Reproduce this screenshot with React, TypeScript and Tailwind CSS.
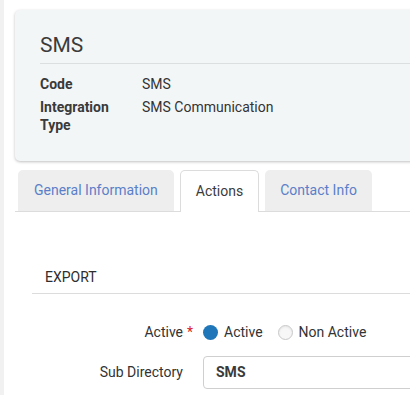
import React from "react";

const font = { fontFamily: "Roboto, 'Liberation Sans', sans-serif" };

function Radio({ checked }: { checked: boolean }) {
  if (checked) {
    return <span className="inline-block h-[15px] w-[15px] rounded-full bg-[#1f76b8]" />;
  }
  return (
    <span className="inline-block h-[15px] w-[15px] rounded-full border border-[#c8c8c8] bg-[#f7f7f7] shadow-[inset_0_1px_2px_rgba(0,0,0,0.08)]" />
  );
}

export default function App() {
  return (
    <div className="flex h-[395px] w-[410px] overflow-hidden bg-white text-[#333]" style={font}>
      <div className="w-[4px] shrink-0 bg-[#f1f1f1]" />
      <div className="flex flex-col pl-[11px] pt-[10px]">
        {/* header card */}
        <div className="w-[600px] rounded-[5px] bg-[#f3f6f7] pb-[27px] pl-[25px] pt-[23px] shadow-[0_1px_3px_rgba(0,0,0,0.25)]">
          <h1 className="h-[30px] text-[21px] leading-[24px] text-[#3b3b3b]">SMS</h1>
          <div className="border-t border-[#dcdfe0] pt-[11px] text-[14px] leading-[18px]">
            <div className="flex">
              <span className="w-[102px] font-bold text-[#3a3a3a]">Code</span>
              <span>SMS</span>
            </div>
            <div className="mt-[5px] flex">
              <span className="w-[102px] font-bold text-[#3a3a3a]">
                Integration
                <br />
                Type
              </span>
              <span>SMS Communication</span>
            </div>
          </div>
        </div>

        {/* tabs */}
        <div className="mt-[9px] flex w-[600px] gap-[6px] border-b border-[#dcdcdc] pl-[3px] text-[14px]">
          <div className="flex h-[41px] items-center rounded-t-[5px] bg-[#eeeeee] px-[16px] text-[#5b7fc9]">
            General Information
          </div>
          <div className="-mb-px flex h-[42px] items-center rounded-t-[5px] border border-b-0 border-[#dcdcdc] bg-white px-[15px] text-[#3b3b3b]">
            Actions
          </div>
          <div className="flex h-[41px] items-center rounded-t-[5px] bg-[#eeeeee] px-[15px] text-[#5b7fc9]">
            Contact Info
          </div>
        </div>

        {/* export section */}
        <div className="ml-[17px] mt-[56px] w-[600px] border-b border-[#dcdcdc] pb-[7px] pl-[13px] text-[14px] leading-[18px] text-[#2e2e2e]">
          EXPORT
        </div>

        <div className="mt-[28px] flex items-center text-[14px]">
          <div className="relative w-[168px] text-right">
            Active
            <span className="absolute -right-[10px] top-0 text-[#e02020]">*</span>
          </div>
          <div className="ml-[20px] flex items-center">
            <Radio checked />
            <span className="ml-[6px]">Active</span>
            <span className="ml-[15px] flex items-center">
              <Radio checked={false} />
            </span>
            <span className="ml-[6px]">Non Active</span>
          </div>
        </div>

        <div className="mt-[13px] flex items-center text-[14px]">
          <div className="w-[168px] text-right">Sub Directory</div>
          <div className="ml-[20px] flex h-[33px] w-[300px] items-center rounded-[4px] border border-[#cfcfcf] pl-[12px] font-bold text-[#3a3a3a]">
            SMS
          </div>
        </div>
      </div>
    </div>
  );
}
